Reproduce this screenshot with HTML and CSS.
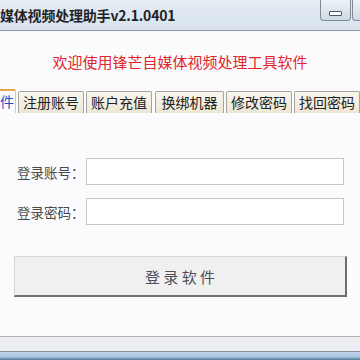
FILE: index.html
```
<!DOCTYPE html>
<html lang="zh">

<head>
    <meta charset="UTF-8">
    <title>媒体视频处理助手</title>
    <link rel="stylesheet" href="styles.css">
</head>

<body>
    <div class="window">
        <div class="titlebar">
            <span class="title">媒体视频处理助手v2.1.0401</span>
            <div class="winbtns">
                <span class="winbtn min"><i></i></span>
                <span class="winbtn max"></span>
            </div>
        </div>

        <div class="content">
            <p class="welcome">欢迎使用锋芒自媒体视频处理工具软件</p>

            <!-- tab strip, first tab is scrolled off to the left -->
            <div class="tabs">
                <span class="tab active">件</span>
                <span class="tab">注册账号</span>
                <span class="tab">账户充值</span>
                <span class="tab wide">换绑机器</span>
                <span class="tab">修改密码</span>
                <span class="tab">找回密码</span>
            </div>

            <div class="panel">
                <div class="row">
                    <label>登录账号：</label>
                    <input type="text">
                </div>
                <div class="row">
                    <label>登录密码：</label>
                    <input type="password">
                </div>
                <button class="login">登 录 软 件</button>
            </div>
        </div>

        <div class="statusbar"></div>
        <div class="bottomedge"></div>
    </div>
</body>

</html>
```

FILE: styles.css
```
   html, body {
       margin: 0;
       padding: 0;
       width: 360px;
       height: 360px;
       overflow: hidden;
       background: #fbfbfd;
       font-family: "Noto Sans CJK SC", "Noto Sans", sans-serif;
   }

   .window {
       display: flex;
       flex-direction: column;
       height: 360px;
       overflow: hidden;
   }

   .titlebar {
       height: 30px;
       flex: none;
       display: flex;
       justify-content: space-between;
       background: linear-gradient(#e4ecf4, #d8e3ee);
       border-bottom: 1px solid #8f9aa6;
       overflow: hidden;
   }

   .title {
       font-size: 14px;
       font-weight: bold;
       color: #1f2328;
       line-height: 30px;
       letter-spacing: -0.2px;
       white-space: nowrap;
   }

   .winbtns {
       display: flex;
       gap: 1px;
   }

   .winbtn {
       display: flex;
       align-items: center;
       justify-content: center;
       width: 29px;
       height: 20px;
       border: 1px solid #7d8b99;
       border-top: none;
       border-radius: 0 0 4px 4px;
       background: linear-gradient(#eef2f7, #cfd9e4);
   }

   /* only the left edge of the maximize button is on screen */
   .winbtn.max {
       width: 7px;
       border-right: none;
       border-radius: 0 0 0 4px;
   }

   .winbtn.min i {
       display: block;
       width: 11px;
       height: 3px;
       margin-top: 6px;
       background: #fff;
       border: 1px solid #4c5a6a;
       border-radius: 1px;
   }

   .content {
       flex: 1;
       display: flex;
       flex-direction: column;
   }

   .welcome {
       margin: 21px 0 0 0;
       text-align: center;
       font-size: 15px;
       line-height: 20px;
       color: #e0262c;
   }

   .tabs {
       display: flex;
       align-items: flex-end;
       gap: 2px;
       margin-top: 17px;
       height: 24px;
       overflow: hidden;
   }

   .tab {
       flex: none;
       height: 21px;
       width: 64px;
       text-align: center;
       font-size: 14px;
       line-height: 21px;
       color: #222;
       border: 1px solid #a3a3a3;
       border-bottom: none;
       border-radius: 2px 2px 0 0;
       background: linear-gradient(#faf7ee, #ece6d4);
   }

   .tab.wide {
       width: 67px;
       margin-left: 1px;
   }

   .tab.active {
       width: 13px;
       height: 22px;
       text-align: right;
       padding-right: 2px;
       color: #1f4fc8;
       background: #fcfcfd;
       border-left: none;
       border-color: #c9c9c9;
       border-top: 2px solid #e8a44c;
       border-radius: 0 2px 0 0;
   }

   .panel {
       display: flex;
       flex-direction: column;
       padding: 45px 16px 0 17px;
   }

   .row {
       display: flex;
       align-items: center;
       margin-bottom: 13px;
   }

   .row label {
       width: 69px;
       font-size: 13.5px;
       color: #4a4a4a;
   }

   .row input {
       width: 256px;
       height: 25px;
       padding: 0;
       margin: 0;
       border: 1px solid #c6c6c6;
       background: #fff;
   }

   .login {
       margin: 18px 0 0 -3px;
       width: 333px;
       height: 41px;
       font-family: "Noto Sans CJK SC", sans-serif;
       font-size: 15px;
       color: #4a4f5c;
       background: #f0f0f0;
       border: 1px solid #d6d6d6;
       border-right: 2px solid #6d6d6d;
       border-bottom: 2px solid #6d6d6d;
   }

   .statusbar {
       height: 14px;
       flex: none;
       background: #eceef3;
       border-top: 1px solid #b3b3b3;
       border-bottom: 1px solid #8a8d92;
   }

   .bottomedge {
       height: 8px;
       flex: none;
       background: linear-gradient(#c3d6ea, #aac6e2 60%, #4f7892);
   }
```
